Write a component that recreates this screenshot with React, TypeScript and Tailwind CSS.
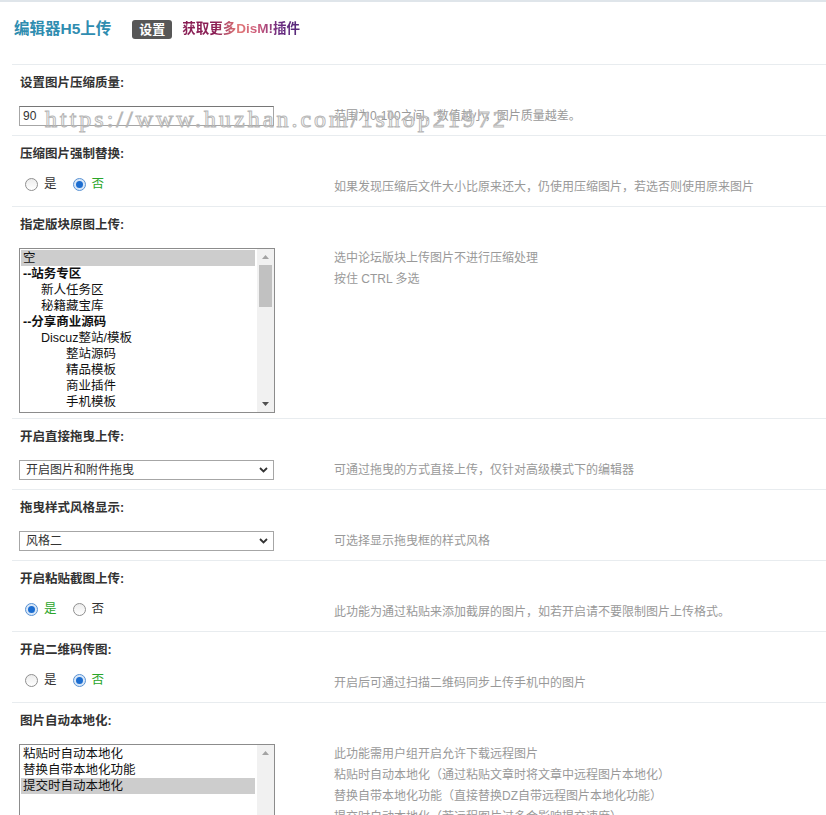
import type { ReactNode } from "react";

type Item = { label: string; pad: string; bold?: boolean; selected?: boolean };

const FORUMS: Item[] = [
  { label: "空", pad: "pl-[2px]", selected: true },
  { label: "--站务专区", pad: "pl-[2px]", bold: true },
  { label: "新人任务区", pad: "pl-[20px]" },
  { label: "秘籍藏宝库", pad: "pl-[20px]" },
  { label: "--分享商业源码", pad: "pl-[2px]", bold: true },
  { label: "Discuz整站/模板", pad: "pl-[20px]" },
  { label: "整站源码", pad: "pl-[45px]" },
  { label: "精品模板", pad: "pl-[45px]" },
  { label: "商业插件", pad: "pl-[45px]" },
  { label: "手机模板", pad: "pl-[45px]" },
];

const LOCALIZE: Item[] = [
  { label: "粘贴时自动本地化", pad: "pl-[2px]" },
  { label: "替换自带本地化功能", pad: "pl-[2px]" },
  { label: "提交时自动本地化", pad: "pl-[2px]", selected: true },
];

export default function App() {
  return (
    <div className="relative min-h-[815px] overflow-hidden border-t-[2px] border-[#dfe5ea] bg-white pl-[12px] font-['Liberation_Sans','Noto_Sans_CJK_SC',sans-serif] text-[#333]">
      {/* 标题栏 */}
      <div className="flex h-[62px] items-center pb-[8px] pl-[2px]">
        <h3 className="text-[15.5px] font-bold text-[#2f8db0]">编辑器H5上传</h3>
        <span className="ml-[21px] rounded-[3px] bg-[#575757] px-[7px] text-[13px] font-bold leading-[19px] text-white">
          设置
        </span>
        <a className="ml-[10px] bg-[linear-gradient(90deg,#8a1f55_0%,#8a1f55_28%,#e27a78_48%,#c8567a_66%,#6a2a80_82%,#552a7a_100%)] bg-clip-text text-[13.5px] font-bold text-transparent">
          获取更多DisM!插件
        </a>
      </div>

      <Section
        title="设置图片压缩质量:"
        tip={["范围为0-100之间，数值越小，图片质量越差。"]}
        field={
          <div className="flex h-[20px] w-[255px] items-center border border-[#a6a6a6] border-t-[#767676] pl-[3px] text-[12px]">
            90
          </div>
        }
      />
      <Section
        title="压缩图片强制替换:"
        tip={["如果发现压缩后文件大小比原来还大，仍使用压缩图片，若选否则使用原来图片"]}
        field={<RadioPair yes={false} />}
      />
      <Section
        title="指定版块原图上传:"
        tall
        tip={["选中论坛版块上传图片不进行压缩处理", "按住 CTRL 多选"]}
        field={<ListBox items={FORUMS} height="h-[165px]" thumb />}
      />
      <Section
        title="开启直接拖曳上传:"
        tip={["可通过拖曳的方式直接上传，仅针对高级模式下的编辑器"]}
        field={<Select value="开启图片和附件拖曳" />}
      />
      <Section
        title="拖曳样式风格显示:"
        tip={["可选择显示拖曳框的样式风格"]}
        field={<Select value="风格二" />}
      />
      <Section
        title="开启粘贴截图上传:"
        tip={["此功能为通过粘贴来添加截屏的图片，如若开启请不要限制图片上传格式。"]}
        field={<RadioPair yes />}
      />
      <Section
        title="开启二维码传图:"
        tip={["开启后可通过扫描二维码同步上传手机中的图片"]}
        field={<RadioPair yes={false} />}
      />
      <Section
        title="图片自动本地化:"
        tall
        tip={[
          "此功能需用户组开启允许下载远程图片",
          "粘贴时自动本地化（通过粘贴文章时将文章中远程图片本地化）",
          "替换自带本地化功能（直接替换DZ自带远程图片本地化功能）",
          "提交时自动本地化（若远程图片过多会影响提交速度）",
        ]}
        field={<ListBox items={LOCALIZE} height="h-[165px]" />}
      />

      {/* 水印 */}
      <div className="pointer-events-none absolute left-[45px] top-[102px] whitespace-nowrap font-['Liberation_Serif',serif] text-[24px] leading-[30px] tracking-[3px] text-transparent [-webkit-text-stroke:1px_#b8b8b8]">
        https://www.huzhan.com/1shop21972
      </div>
    </div>
  );
}

function Section({
  title,
  field,
  tip,
  tall,
}: {
  title: string;
  field: ReactNode;
  tip: string[];
  tall?: boolean;
}) {
  return (
    <div className="border-t border-[#e8ecef]">
      <div className="pl-[8px] pt-[10px] text-[12.5px] font-bold leading-[16px] text-[#333]">
        {title}
      </div>
      <div className={`mt-[15px] flex items-start ${tall ? "pb-[5px]" : "pb-[9px]"}`}>
        <div className="w-[322px] shrink-0 pl-[7px]">{field}</div>
        <div
          className={`text-[12px] text-[#999] ${tip.length > 1 ? "leading-[21px]" : "leading-[20px]"}`}
        >
          {tip.map((t) => (
            <div key={t}>{t}</div>
          ))}
        </div>
      </div>
    </div>
  );
}

function RadioPair({ yes }: { yes: boolean }) {
  return (
    <div className="flex h-[14px] items-center gap-[16px] pl-[6px] text-[12.5px]">
      <Radio checked={yes} label="是" />
      <Radio checked={!yes} label="否" />
    </div>
  );
}

function Radio({ checked, label }: { checked: boolean; label: string }) {
  return (
    <span className="flex items-center gap-[6px]">
      <span
        className={`flex h-[13px] w-[13px] items-center justify-center rounded-full border ${
          checked
            ? "border-[#5b93d3] bg-[#d8e7f8]"
            : "border-[#8f8f8f] bg-[linear-gradient(#ececec,#ffffff)]"
        }`}
      >
        {checked && <span className="h-[7px] w-[7px] rounded-full bg-[#1c6dd0]" />}
      </span>
      <span className={checked ? "text-[#2aa52a]" : "text-[#333]"}>{label}</span>
    </span>
  );
}

function Select({ value }: { value: string }) {
  return (
    <div className="flex h-[20px] w-[255px] items-center justify-between border border-[#a6a6a6] bg-white pl-[6px] pr-[5px] text-[12px] text-[#333]">
      <span>{value}</span>
      <svg width="9" height="6" viewBox="0 0 9 6">
        <path d="M1 1l3.5 3.5L8 1" fill="none" stroke="#333" strokeWidth="1.8" />
      </svg>
    </div>
  );
}

function ListBox({ items, height, thumb }: { items: Item[]; height: string; thumb?: boolean }) {
  return (
    <div className={`flex w-[256px] border border-[#8c8c8c] bg-white ${height}`}>
      <div className="flex-1 pl-[1px] pr-[2px] pt-[1px]">
        {items.map((it) => (
          <div
            key={it.label}
            className={`${it.pad} text-[12.5px] leading-[16px] text-[#111] ${it.bold ? "font-bold" : ""} ${
              it.selected ? "bg-[#cdcdcd]" : ""
            }`}
          >
            {it.label}
          </div>
        ))}
      </div>
      <div className="flex w-[17px] flex-col bg-[#f1f1f1]">
        <div className="flex h-[16px] items-center justify-center">
          <svg width="7" height="4" viewBox="0 0 7 4">
            <path d="M0 4L3.5 0L7 4z" fill="#a3a3a3" />
          </svg>
        </div>
        {thumb && <div className="mx-[2px] h-[42px] bg-[#c1c1c1]" />}
        <div className="flex-1" />
        {thumb && (
          <div className="flex h-[16px] items-center justify-center">
            <svg width="7" height="4" viewBox="0 0 7 4">
              <path d="M0 0L3.5 4L7 0z" fill="#505050" />
            </svg>
          </div>
        )}
      </div>
    </div>
  );
}
